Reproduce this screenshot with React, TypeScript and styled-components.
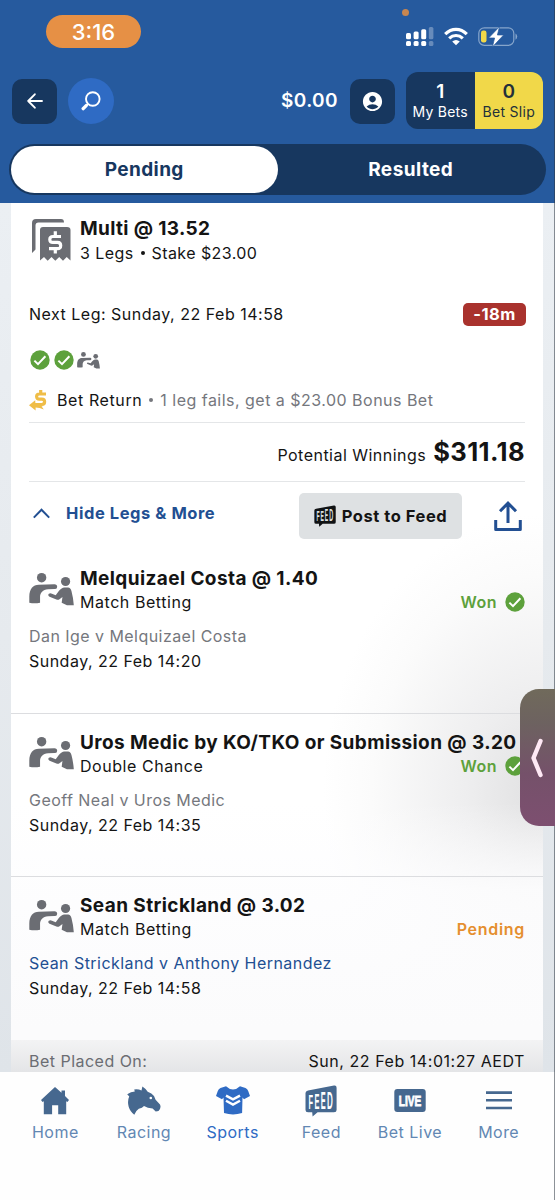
import React from "react";
import styled, { createGlobalStyle } from "styled-components";
import { MdAccountCircle } from "react-icons/md";

const Global = createGlobalStyle`
  * { box-sizing: border-box; }
  body { margin: 0; background: #fff; font-family: Inter, "Liberation Sans", sans-serif; color: #111; }
  svg { display: block; flex: none; }
`;

const Text = styled.span<{ $s?: number; $w?: number; $ls?: number; $c?: string; $lh?: number }>`
  font-size: ${(p) => p.$s ?? 16}px;
  font-weight: ${(p) => p.$w ?? 400};
  letter-spacing: ${(p) => p.$ls ?? 0.48}px;
  color: ${(p) => p.$c ?? "#141414"};
  line-height: ${(p) => p.$lh ?? 24}px;
  white-space: nowrap;
`;

const Screen = styled.div`
  position: relative;
  width: 555px;
  height: 1200px;
  overflow: hidden;
  display: flex;
  flex-direction: column;
`;

const Header = styled.header`
  height: 203px;
  flex: none;
  background: #265a9e;
`;

const StatusBar = styled.div`
  height: 72px;
  display: flex;
  align-items: flex-start;
  justify-content: space-between;
  padding: 15px 37px 0 46px;
`;

const Clock = styled.div`
  width: 95px;
  height: 33px;
  border-radius: 17px;
  background: #e69045;
  display: flex;
  align-items: center;
  justify-content: center;
`;

const StatusIcons = styled.div`
  display: flex;
  gap: 10px;
  padding-top: 12px;
`;

const MicDot = styled.i`
  position: absolute;
  left: 402px;
  top: 9px;
  width: 7px;
  height: 7px;
  border-radius: 50%;
  background: #c78650;
`;

const Toolbar = styled.div`
  height: 58px;
  display: flex;
  align-items: center;
  padding: 0 12px 0 12px;
`;

const SquareButton = styled.button<{ $round?: boolean }>`
  width: ${(p) => (p.$round ? 46 : 45)}px;
  height: ${(p) => (p.$round ? 46 : 45)}px;
  border: 0;
  padding: 0;
  border-radius: ${(p) => (p.$round ? "50%" : "10px")};
  background: ${(p) => (p.$round ? "#2f6bc4" : "#17375f")};
  margin-right: 11px;
  display: flex;
  align-items: center;
  justify-content: center;
  color: #fff;
`;

const Balance = styled.div`
  margin-left: auto;
  margin-right: 12px;
  display: flex;
`;

const BetCounters = styled.div`
  display: flex;
  height: 57px;
  width: 137px;
  margin-bottom: 1px;
  border-radius: 12px;
  overflow: hidden;
`;

const Counter = styled.div<{ $active?: boolean }>`
  flex: 1;
  display: flex;
  flex-direction: column;
  align-items: center;
  padding-top: 8px;
  background: ${(p) => (p.$active ? "#f1d849" : "#17375f")};
`;

const Tabs = styled.div`
  margin: 14px 9px 0;
  height: 51px;
  border-radius: 26px;
  background: #17375f;
  padding: 2px;
  display: flex;
`;

const Tab = styled.div<{ $on?: boolean }>`
  flex: 1;
  border-radius: 24px;
  background: ${(p) => (p.$on ? "#fff" : "transparent")};
  display: flex;
  align-items: center;
  justify-content: center;
`;

const Content = styled.main`
  height: 869px;
  flex: none;
  overflow: hidden;
  padding: 0 12px 0 11px;
  background: linear-gradient(180deg, #ebeff3 0%, #e6eaee 50%, #dfe4e9 100%);
`;

const Card = styled.section`
  height: 869px;
  background:
    linear-gradient(180deg, rgba(253, 253, 254, 0) 69%, rgba(253, 253, 254, 0.85) 79%, #fbfbfc 95%),
    radial-gradient(ellipse 220px 280px at 100% 68%, #e0e0e1 0%, #eeeeef 35%, #fbfbfb 78%, #fff 100%);
  display: flex;
  flex-direction: column;
`;

const Summary = styled.div`
  padding: 14px 18px 0;
`;

const TitleRow = styled.div`
  display: flex;
  gap: 6px;
  height: 47px;
`;

const Stack = styled.div`
  display: flex;
  flex-direction: column;
`;

const IconSlot = styled.div<{ $top: number; $left?: number }>`
  width: 45px;
  flex: none;
  padding-top: ${(p) => p.$top}px;
  padding-left: ${(p) => p.$left ?? 0}px;
`;

const Dot = styled.i<{ $c: string; $gap: number }>`
  width: 4px;
  height: 4px;
  margin: 0 ${(p) => p.$gap}px;
  border-radius: 50%;
  background: ${(p) => p.$c};
`;

const Inline = styled.div`
  height: 23px;
  display: flex;
  align-items: center;
`;

const NextLeg = styled.div`
  margin-top: 38px;
  margin-right: -1px;
  height: 24px;
  display: flex;
  align-items: center;
  justify-content: space-between;
`;

const TimeBadge = styled.div`
  width: 63px;
  height: 23px;
  border-radius: 5px;
  background: #a9322d;
  display: flex;
  align-items: center;
  justify-content: center;
`;

const LegMarks = styled.div`
  margin-top: 24px;
  height: 20px;
  padding-left: 1px;
  display: flex;
  align-items: center;
  gap: 4px;

  svg:last-child { margin-left: -1px; }
`;

const Offer = styled.div`
  margin-top: 18px;
  height: 35px;
  padding-bottom: 11px;
  display: flex;
  align-items: center;
  border-bottom: 1px solid #e4e6e8;

  svg { margin-right: 9px; }
`;

const Winnings = styled.div`
  height: 59px;
  padding-top: 17px;
  display: flex;
  align-items: baseline;
  justify-content: flex-end;
  gap: 7px;
  border-bottom: 1px solid #e4e6e8;
`;

const Actions = styled.div`
  height: 68px;
  padding-top: 11px;
  display: flex;
  align-items: flex-start;
`;

const Toggle = styled.div`
  display: flex;
  align-items: center;
  gap: 16px;
  padding: 8px 0 0 4px;
  flex: 1;
`;

const FeedButton = styled.button`
  width: 163px;
  height: 46px;
  border: 0;
  border-radius: 5px;
  padding: 0;
  background: #dee1e3;
  display: flex;
  align-items: center;
  justify-content: center;
  gap: 6px;
  font-family: inherit;
`;

const ShareSlot = styled.div`
  padding: 8px 3px 0 32px;
`;

const LegBox = styled.article<{ $last?: boolean }>`
  height: ${(p) => (p.$last ? 162.5 : 163.5)}px;
  flex: none;
  padding: 17px 18px 0;
  border-bottom: ${(p) => (p.$last ? "0" : "1px solid #dcdde0")};
`;

const LegTitle = styled.div`
  display: flex;
  gap: 6px;
  height: 46px;
`;

const LegBody = styled.div`
  flex: 1;
  min-width: 0;
  display: flex;
  flex-direction: column;
`;

const SplitRow = styled.div`
  height: 22px;
  display: flex;
  align-items: center;
  justify-content: space-between;
`;

const Result = styled.div`
  display: flex;
  align-items: center;
  gap: 8px;
`;

const LegInfo = styled.div`
  margin-top: 10px;
  display: flex;
  flex-direction: column;
`;

const Placed = styled.footer`
  flex: 1;
  padding: 10px 18px 0;
  display: flex;
  justify-content: space-between;
  background: linear-gradient(180deg, #f3f3f4, #e4e5e7);
`;

const Nav = styled.nav`
  height: 128px;
  flex: none;
  background: #fefefe;
  display: grid;
  grid-template-columns: repeat(6, 1fr);
  padding: 10px 12px 0 11px;
`;

const NavItem = styled.div`
  display: flex;
  flex-direction: column;
  align-items: center;
`;

const SideHandle = styled.div`
  position: absolute;
  left: 520px;
  top: 689px;
  width: 35px;
  height: 137px;
  border-radius: 19px 0 0 19px;
  background: linear-gradient(180deg, #706a5b 0%, #6d6260 25%, #75516a 62%, #7d4f70 100%);
  display: flex;
  align-items: center;
  padding-left: 10px;
`;

const EdgeLine = styled.div`
  position: absolute;
  right: 0;
  top: 0;
  width: 1px;
  height: 1200px;
  background: rgba(45, 55, 65, 0.55);
`;

const Check = ({ size = 20 }: { size?: number }) => (
  <svg width={size} height={size} viewBox="0 0 20 20">
    <circle cx="10" cy="10" r="9.7" fill="#5da13c" />
    <path d="M4.4 10.6 8 14.1 15.4 6.2" fill="none" stroke="#fff" strokeWidth="2" />
  </svg>
);

const Fighters = ({ width = 46 }: { width?: number }) => (
  <svg width={width} height={(width * 34) / 46} viewBox="0 0 46 34" fill="#6b6d73">
    <circle cx="12.9" cy="4.8" r="4.8" />
    <circle cx="37.4" cy="8.7" r="4.7" />
    <path d="M.3 30.3V24C.5 16 4 12.2 10 12L26 11.5q2.8 0 2.8 2.6T26 16.3L19.5 16.6C14 17 11.5 20.5 11.3 24V30.3Q5.5 31.8.3 30.3Z" />
    <path d="M20.3 21.3q1.6-1 3.2 0L27.3 22.7 30.5 18.5Q33.5 14.8 36 14.8H40Q42.5 14.8 43.4 18.5 45.2 25 45.8 33L38.8 33 33.4 30.4 34.2 24.5 31.5 26.5Q29.8 27.9 28 27.1L21 24.2Q18.8 23 20.3 21.3Z" />
  </svg>
);

const Receipt = () => (
  <svg width="39" height="43" viewBox="0 0 39 43">
    <path d="M0 34V4Q0 0 4 0H29Q32 0 32 3.4H6.5Q3.5 3.4 3.5 6.5V30.5Z" fill="#6b6d73" />
    <path d="M8 11Q8 8 11 8H35Q38.5 8 38.5 11V41.5L34.7 38 31 41.8 27.2 38 23.3 41.8 19.5 38 15.7 41.8 12 38 8 41.5Z" fill="#6b6d73" />
    <path d="M29 17.5H21Q17.8 17.5 17.8 20.5T21 23.4H25.5Q28.7 23.4 28.7 26.6T25.5 29.7H17M23.3 12.2V17.5M23.3 29.5V34.4" stroke="#fff" strokeWidth="3.2" fill="none" />
  </svg>
);

const BonusDollar = () => (
  <svg width="19" height="22" viewBox="0 0 19 22">
    <path d="M17 5H10.5Q7.6 5 7.6 7.6T10.5 10.1H12.8Q15.6 10.1 15.6 12.8T12.8 15.5H6M11.7 1V5M11.7 15.5V17.7" stroke="#efbd47" strokeWidth="3.2" fill="none" />
    <path d="M0 16.3 6.2 11.2 6.4 14.5Q12 15.2 14.8 20.6 10.5 18.6 6.6 18.6V21.5Z" fill="#efbd47" />
  </svg>
);

const FeedLogo = ({ width, color, ink }: { width: number; color: string; ink: string }) => (
  <svg width={width} height={width} viewBox="0 0 32 32">
    <path d="M3 5.5 29 .6Q31.6.2 31.6 2.8V25Q31.6 27.3 29 27.3H12.6L7.6 31.5 7.2 27.3H3Q.5 27.3.5 25V8Q.5 6 3 5.5Z" fill={color} />
    <g fontWeight="700" fontFamily="Liberation Sans, sans-serif" fontSize="20" fill={ink}>
      <text transform="matrix(.37 0 0 1.02 3.6 23.6)">F</text>
      <text transform="matrix(.37 0 0 1.09 9.6 23.6)">E</text>
      <text transform="matrix(.37 0 0 1.16 15.8 23.6)">E</text>
      <text transform="matrix(.4 0 0 1.23 22 23.6)">D</text>
    </g>
  </svg>
);

const HomeIcon = () => (
  <svg width="28" height="28" viewBox="0 0 28 28" fill="#46688f">
    <path d="M14 0 20.5 5.8V3.5H24V9L28 13 26.4 14.9 25.2 14.2V27.2H17.2V18.3H11.1V27.2H2.8V14.2L1.5 14.9 0 13Z" />
  </svg>
);

const HorseIcon = () => (
  <svg width="34" height="29" viewBox="0 0 34 29">
    <path d="M.2 8.2Q4 5.8 7.8 5.6L7.2 3.4Q11 2.6 14.5 4.6L15.4.4Q18.6 2.4 20.7 5.7 24.8 7.3 27 10L28.6 13.7 33 18.6Q34.6 22 31.5 25L28.7 25.4 25.6 22.6Q20.5 22.4 17 20 15.4 22 11.8 22.7 8.4 25 7.3 28.7 3 25.5 1.6 20.5.2 15 2.2 10.5Z" fill="#46688f" />
    <circle cx="23.8" cy="12" r="1.3" fill="#fff" />
  </svg>
);

const ShirtIcon = () => (
  <svg width="34" height="29" viewBox="0 0 34 29">
    <path d="M10 .3Q13.5 3.6 17 3.6T24 .3L29.5 2Q31.5 2.8 32.2 5L34 10 28 13.2 26.5 11.5 26.1 27Q17 29.8 8 27L7.5 11.5 6 13.2 0 10 1.8 5Q2.5 2.8 4.5 2Z" fill="#2f6bc4" />
    <path d="M10 9.6 17 13.4 24 9.6M10 14.8 17 18.6 24 14.8" fill="none" stroke="#fff" strokeWidth="2.4" />
  </svg>
);

const LiveIcon = () => (
  <svg width="32" height="23" viewBox="0 0 32 23">
    <rect x=".3" y="0" width="31.4" height="23" rx="3" fill="#46688f" />
    <text x="4.8" y="17" fontSize="15.5" fontWeight="700" fontFamily="Liberation Sans, sans-serif" textLength="22.4" lengthAdjust="spacingAndGlyphs" fill="#fff" stroke="#fff" strokeWidth=".9">
      LIVE
    </text>
  </svg>
);

const MoreIcon = () => (
  <svg width="26" height="19" viewBox="0 0 26 19" stroke="#46688f" strokeWidth="2.6">
    <path d="M0 1.6H26M0 9.3H26M0 17H26" />
  </svg>
);

const NavIconBox = styled.div`
  height: 37px;
  margin-bottom: 1px;
  display: flex;
  align-items: center;
`;

const navItems = [
  { label: "Home", icon: <HomeIcon /> },
  { label: "Racing", icon: <HorseIcon /> },
  { label: "Sports", icon: <ShirtIcon />, active: true },
  { label: "Feed", icon: <FeedLogo width={32} color="#46688f" ink="#fff" /> },
  { label: "Bet Live", icon: <LiveIcon /> },
  { label: "More", icon: <MoreIcon /> },
];

const legs = [
  { title: "Melquizael Costa @ 1.40", market: "Match Betting", match: "Dan Ige v Melquizael Costa", time: "Sunday, 22 Feb 14:20", won: true },
  { title: "Uros Medic by KO/TKO or Submission @ 3.20", market: "Double Chance", match: "Geoff Neal v Uros Medic", time: "Sunday, 22 Feb 14:35", won: true },
  { title: "Sean Strickland @ 3.02", market: "Match Betting", match: "Sean Strickland v Anthony Hernandez", time: "Sunday, 22 Feb 14:58", won: false },
];

export default function App() {
  return (
    <Screen>
      <Global />
      <Header>
        <StatusBar>
          <Clock>
            <Text $s={22} $w={500} $c="#fff" $ls={0}>3:16</Text>
          </Clock>
          <StatusIcons>
            <svg width="28" height="19" viewBox="0 0 28 19" fill="#fff">
              <rect x="0" y="6" width="5" height="6.3" rx="1.5" />
              <rect x="7.6" y="4.6" width="5" height="7.7" rx="1.5" />
              <rect x="15.2" y="2.3" width="5" height="10" rx="1.5" />
              <rect x="22.8" y="0" width="4.6" height="12.3" rx="1.5" opacity=".3" />
              <rect x="0" y="14" width="5" height="5" rx="1.5" />
              <rect x="7.6" y="14" width="5" height="5" rx="1.5" />
              <rect x="15.2" y="14" width="5" height="5" rx="1.5" />
              <rect x="22.8" y="14" width="4.6" height="5" rx="1.5" opacity=".3" />
            </svg>
            <svg width="24" height="19" viewBox="0 0 24 19" fill="none" stroke="#fff" strokeWidth="3.2">
              <path d="M1.2 7.2Q6 2.4 12 2.4T22.8 7.2M5.2 11.3Q8.2 8.5 12 8.5T18.8 11.3" />
              <path d="M8.2 14.5Q12 11.4 15.8 14.5L12 18.3Z" fill="#fff" stroke="none" />
            </svg>
            <svg width="40" height="20" viewBox="0 0 40 20">
              <rect x=".8" y=".8" width="35" height="17.6" rx="5.5" fill="none" stroke="#86a5cb" strokeWidth="1.2" />
              <path d="M37.5 6.5Q39.2 7.4 39.2 9.6T37.5 12.7Z" fill="#86a5cb" />
              <rect x="3" y="3.5" width="5.5" height="12" rx="2.2" fill="#f1d849" />
              <path d="M21.5-.3 10.6 11H16.6L14.4 20 25.6 8H19.4Z" fill="#fff" stroke="#265a9e" strokeWidth=".7" />
            </svg>
          </StatusIcons>
        </StatusBar>
        <Toolbar>
          <SquareButton>
            <svg width="16" height="16" viewBox="0 0 16 16" fill="none" stroke="#fff" strokeWidth="1.9" strokeLinecap="round" strokeLinejoin="round">
              <path d="M15 8H1.2M7.8 1.3 1.2 8l6.6 6.7" />
            </svg>
          </SquareButton>
          <SquareButton $round>
            <svg width="20" height="20" viewBox="0 0 20 20" fill="none" stroke="#fff">
              <circle cx="11.8" cy="8" r="6.8" strokeWidth="1.9" />
              <path d="M7 12.8 5.5 14.3" strokeWidth="1.9" />
              <path d="M5.2 14.6 2.2 17.6" strokeWidth="3.4" strokeLinecap="round" />
            </svg>
          </SquareButton>
          <Balance>
            <Text $s={19} $w={600} $c="#fff" $ls={0.4}>$0.00</Text>
          </Balance>
          <SquareButton>
            <MdAccountCircle size={23} />
          </SquareButton>
          <BetCounters>
            <Counter>
              <Text $s={19} $w={600} $c="#fff" $ls={0}>1</Text>
              <Text $s={14} $c="#fff" $lh={15} $ls={0.25}>My Bets</Text>
            </Counter>
            <Counter $active>
              <Text $s={19} $w={600} $c="#24303a" $ls={0}>0</Text>
              <Text $s={14} $c="#24303a" $lh={15} $ls={0.3}>Bet Slip</Text>
            </Counter>
          </BetCounters>
        </Toolbar>
        <Tabs>
          <Tab $on><Text $s={19} $w={700} $c="#17375f" $ls={0.4}>Pending</Text></Tab>
          <Tab><Text $s={19} $w={700} $c="#fff" $ls={0.45}>Resulted</Text></Tab>
        </Tabs>
      </Header>

      <Content>
        <Card>
          <Summary>
            <TitleRow>
              <IconSlot $top={2} $left={3}><Receipt /></IconSlot>
              <Stack>
                <Text $s={19} $w={700} $ls={0.36}>Multi @ 13.52</Text>
                <Inline>
                  <Text $ls={0.42}>3 Legs</Text>
                  <Dot $c="#141414" $gap={7} />
                  <Text $ls={0.42}>Stake $23.00</Text>
                </Inline>
              </Stack>
            </TitleRow>
            <NextLeg>
              <Text $ls={0.5}>Next Leg: Sunday, 22 Feb 14:58</Text>
              <TimeBadge><Text $s={16.5} $w={700} $c="#fff">-18m</Text></TimeBadge>
            </NextLeg>
            <LegMarks>
              <Check />
              <Check />
              <Fighters width={23} />
            </LegMarks>
            <Offer>
              <BonusDollar />
              <Text $ls={0.6}>Bet Return</Text>
              <Dot $c="#75777d" $gap={7} />
              <Text $c="#75777d">1 leg fails, get a $23.00 Bonus Bet</Text>
            </Offer>
            <Winnings>
              <Text>Potential Winnings</Text>
              <Text $s={25.5} $w={700} $ls={0.4}>$311.18</Text>
            </Winnings>
            <Actions>
              <Toggle>
                <svg width="17" height="11" viewBox="0 0 17 11" fill="none" stroke="#224f92" strokeWidth="2">
                  <path d="M.8 9.6 8.5 1.7l7.7 7.9" />
                </svg>
                <Text $w={700} $s={16.5} $ls={0.56} $c="#224f92">Hide Legs &amp; More</Text>
              </Toggle>
              <FeedButton>
                <FeedLogo width={22} color="#101214" ink="#dee1e3" />
                <Text $w={700} $s={16.5} $ls={0.55}>Post to Feed</Text>
              </FeedButton>
              <ShareSlot>
                <svg width="28" height="31" viewBox="0 0 28 31" fill="none" stroke="#224f92" strokeWidth="3">
                  <path d="M1.7 19V28.6H26.3V19" strokeLinejoin="round" />
                  <path d="M14 22V2.5M6 10.2 14 2.2l8 8" />
                </svg>
              </ShareSlot>
            </Actions>
          </Summary>
          {legs.map((leg, i) => (
            <LegBox key={leg.title} $last={i === 2}>
              <LegTitle>
                <IconSlot $top={6}><Fighters width={45} /></IconSlot>
                <LegBody>
                  <Text $s={19} $w={700} $ls={0.4}>{leg.title}</Text>
                  <SplitRow>
                    <Text $ls={0.55}>{leg.market}</Text>
                    {leg.won ? (
                      <Result><Text $w={600} $c="#5da13c">Won</Text><Check /></Result>
                    ) : (
                      <Text $w={600} $ls={0.7} $c="#e58f2f">Pending</Text>
                    )}
                  </SplitRow>
                </LegBody>
              </LegTitle>
              <LegInfo>
                <Text $lh={26} $ls={0.45} $c={leg.won ? "#75777d" : "#224f92"}>{leg.match}</Text>
                <Text $lh={25}>{leg.time}</Text>
              </LegInfo>
            </LegBox>
          ))}
          <Placed>
            <Text $c="#6b6d73" $lh={22}>Bet Placed On:</Text>
            <Text $lh={22} $ls={0.55}>Sun, 22 Feb 14:01:27 AEDT</Text>
          </Placed>
        </Card>
      </Content>

      <Nav>
        {navItems.map((n) => (
          <NavItem key={n.label}>
            <NavIconBox>{n.icon}</NavIconBox>
            <Text $c={n.active ? "#2f6bc4" : "#6287b3"}>{n.label}</Text>
          </NavItem>
        ))}
      </Nav>
      <MicDot />
      <EdgeLine />
      <SideHandle>
        <svg width="15" height="40" viewBox="0 0 15 40" fill="none" stroke="#ffe9f5" strokeWidth="4.4" strokeLinecap="round" strokeLinejoin="round">
          <path d="M10.5 3 3.5 20 10.5 37" />
        </svg>
      </SideHandle>
    </Screen>
  );
}
